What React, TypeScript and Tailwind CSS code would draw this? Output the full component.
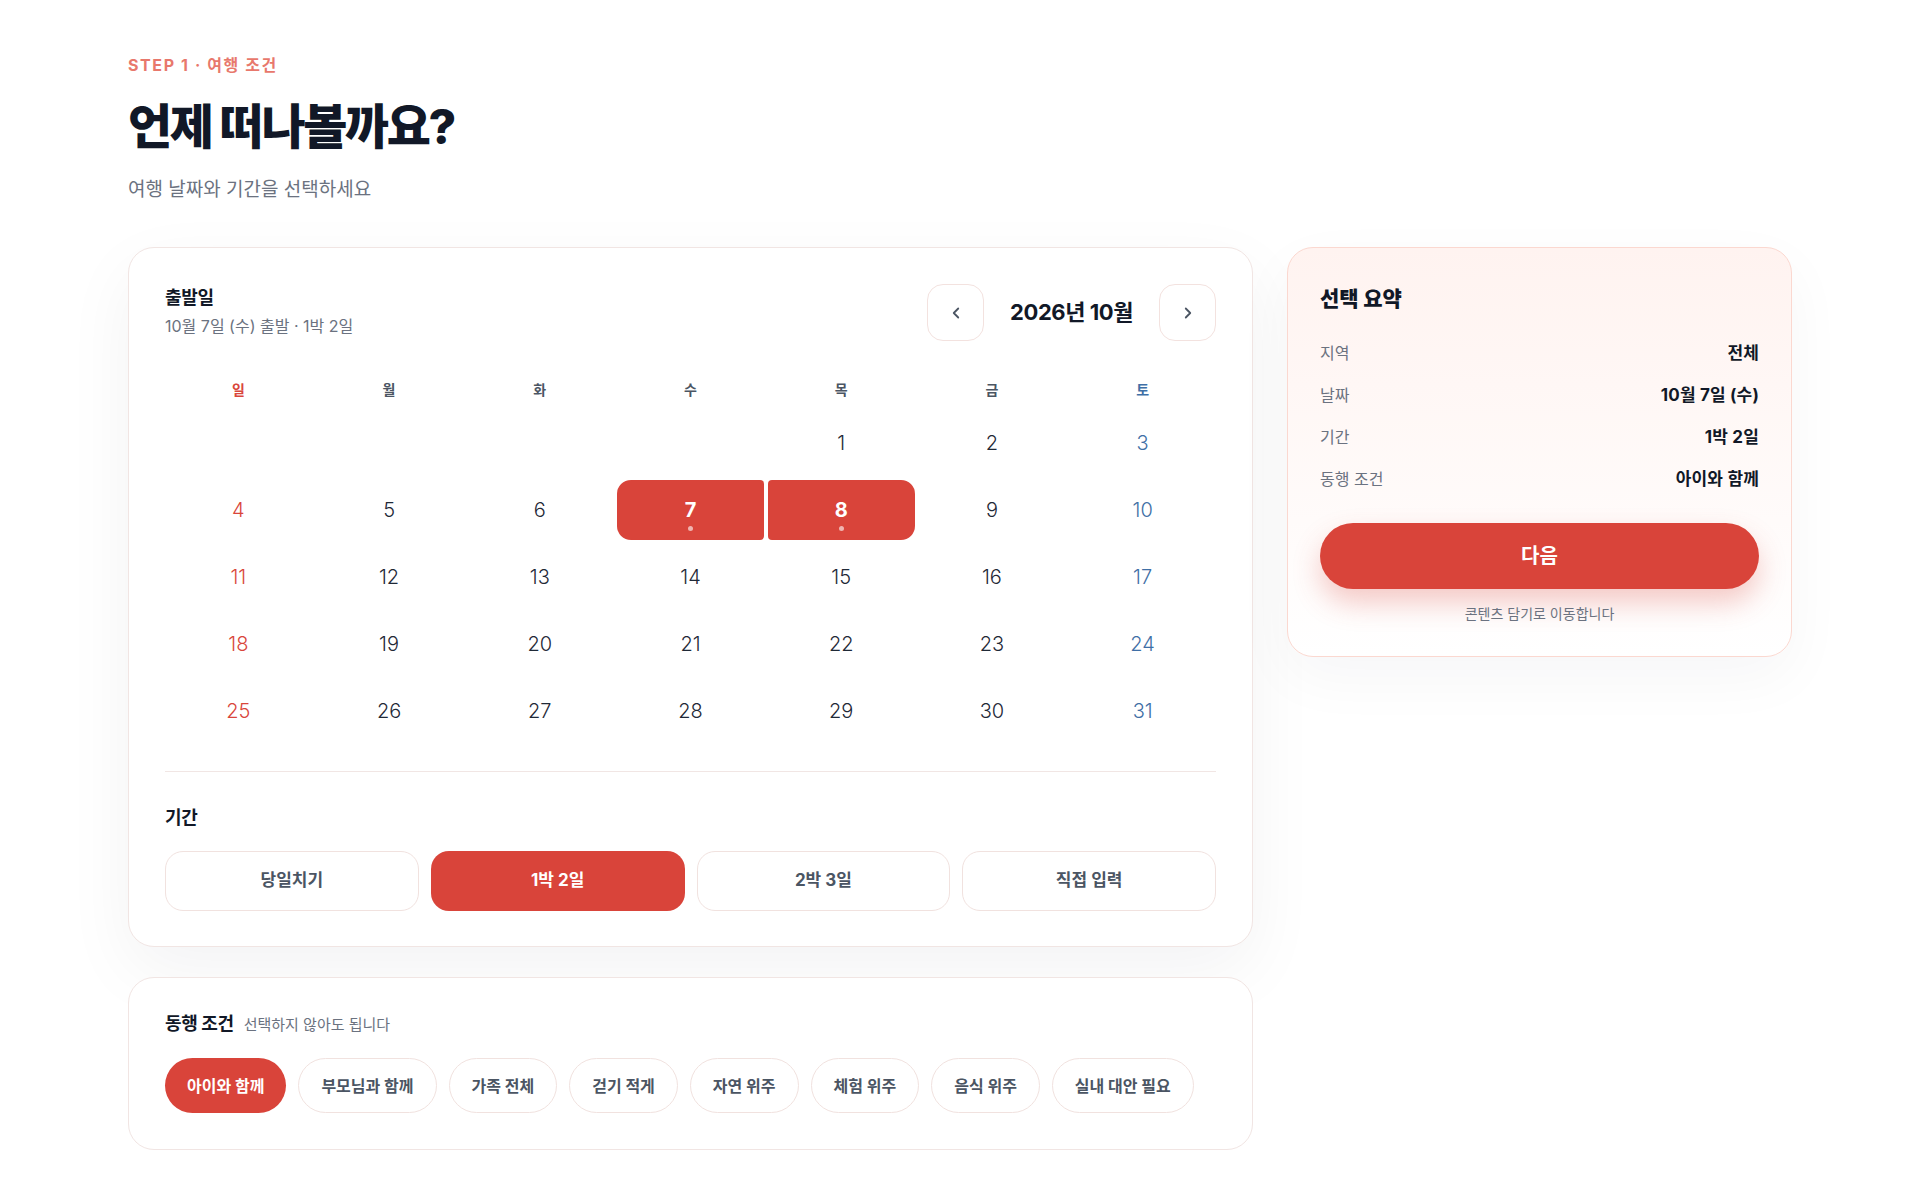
import { ChevronLeft, ChevronRight } from "lucide-react";

const days: (number | null)[] = [
  null, null, null, null,
  ...Array.from({ length: 31 }, (_, i) => i + 1),
];

const weekdays = ["일", "월", "화", "수", "목", "금", "토"];

const durations = ["당일치기", "1박 2일", "2박 3일", "직접 입력"];

const companions = [
  "아이와 함께",
  "부모님과 함께",
  "가족 전체",
  "걷기 적게",
  "자연 위주",
  "체험 위주",
  "음식 위주",
  "실내 대안 필요",
];

const summary = [
  ["지역", "전체"],
  ["날짜", "10월 7일 (수)"],
  ["기간", "1박 2일"],
  ["동행 조건", "아이와 함께"],
];

function DayCell({ day, index }: { day: number | null; index: number }) {
  if (day === null) return <div className="h-[60px]" />;
  const col = index % 7;
  if (day === 7 || day === 8) {
    const shape =
      day === 7
        ? "rounded-l-[14px] rounded-r-[4px]"
        : "rounded-r-[14px] rounded-l-[4px]";
    return (
      <div
        className={`relative flex h-[60px] flex-col items-center justify-center bg-[#d9443a] ${shape}`}
      >
        <span className="text-[20px] font-bold leading-none text-white">{day}</span>
        <span className="absolute bottom-[9px] h-[5px] w-[5px] rounded-full bg-white/60" />
      </div>
    );
  }
  const color =
    col === 0 ? "text-[#d9463b]" : col === 6 ? "text-[#3f6fa6]" : "text-[#1f2937]";
  return (
    <div className={`flex h-[60px] items-center justify-center text-[20px] font-light ${color}`}>
      {day}
    </div>
  );
}

export default function App() {
  return (
    <div className="min-h-screen bg-white font-[family-name:Inter,'Noto_Sans_CJK_KR',sans-serif] text-[#111827]">
      <div className="mx-auto max-w-[1664px] pt-[54px] pb-16">
        {/* page heading */}
        <header>
          <p className="text-[16px] font-bold leading-[22px] tracking-[0.1em] text-[#e8786c]">
            STEP 1 · 여행 조건
          </p>
          <h1 className="mt-[23px] text-[48px] font-extrabold leading-[56px] tracking-[-0.05em] text-[#111827]">
            언제 떠나볼까요?
          </h1>
          <p className="mt-[21px] text-[19px] leading-[27px] text-[#6b7280]">
            여행 날짜와 기간을 선택하세요
          </p>
        </header>

        <div className="mt-[44px] grid grid-cols-[minmax(0,1fr)_505px] items-start gap-[34px]">
          <div className="flex flex-col gap-[30px]">
            {/* date + duration card */}
            <section className="rounded-[26px] border border-[#f1e5e3] bg-white px-9 pt-9 pb-[35px] shadow-[0_24px_70px_rgba(15,23,42,0.05)]">
              <div className="flex items-start justify-between">
                <div>
                  <h2 className="text-[18px] font-bold leading-[27px] tracking-[-0.02em] text-[#111827]">
                    출발일
                  </h2>
                  <p className="mt-1 text-[16px] leading-[22px] text-[#6b7280]">
                    10월 7일 (수) 출발 · 1박 2일
                  </p>
                </div>
                <div className="flex items-center gap-[26px]">
                  <button className="flex h-[57px] w-[57px] items-center justify-center rounded-[16px] border border-[#f3e2df] bg-white text-[#4b5563]">
                    <ChevronLeft size={18} strokeWidth={2.4} />
                  </button>
                  <span className="text-[22px] font-bold tracking-[-0.02em] text-[#111827]">
                    2026년 10월
                  </span>
                  <button className="flex h-[57px] w-[57px] items-center justify-center rounded-[16px] border border-[#f3e2df] bg-white text-[#4b5563]">
                    <ChevronRight size={18} strokeWidth={2.4} />
                  </button>
                </div>
              </div>

              <div className="mt-7 grid grid-cols-7 gap-x-1">
                {weekdays.map((w, i) => (
                  <div
                    key={w}
                    className={`flex h-10 items-center justify-center text-[14px] font-bold ${
                      i === 0 ? "text-[#d9463b]" : i === 6 ? "text-[#3f6fa6]" : "text-[#4b5563]"
                    }`}
                  >
                    {w}
                  </div>
                ))}
              </div>

              <div className="mt-1 grid grid-cols-7 gap-x-1 gap-y-[7px]">
                {days.map((d, i) => (
                  <DayCell key={i} day={d} index={i} />
                ))}
              </div>

              <div className="mt-[30px] h-px bg-[#f1e6e4]" />

              <h3 className="mt-8 text-[18px] font-bold leading-[27px] tracking-[-0.02em] text-[#111827]">
                기간
              </h3>
              <div className="mt-5 grid grid-cols-4 gap-3">
                {durations.map((d) => {
                  const active = d === "1박 2일";
                  return (
                    <button
                      key={d}
                      className={`h-[60px] rounded-[18px] text-[17px] font-bold ${
                        active
                          ? "bg-[#d9443a] text-white"
                          : "border border-[#f1e2df] bg-white text-[#4b5563]"
                      }`}
                    >
                      {d}
                    </button>
                  );
                })}
              </div>
            </section>

            {/* companion card */}
            <section className="rounded-[26px] border border-[#f1e5e3] bg-white px-9 pt-8 pb-9">
              <div className="flex items-baseline gap-[10px]">
                <h3 className="text-[18px] font-bold leading-[27px] tracking-[-0.02em] text-[#111827]">
                  동행 조건
                </h3>
                <span className="text-[15px] text-[#6b7280]">선택하지 않아도 됩니다</span>
              </div>
              <div className="mt-[21px] flex flex-wrap gap-3">
                {companions.map((c) => {
                  const active = c === "아이와 함께";
                  return (
                    <button
                      key={c}
                      className={`h-[55px] rounded-full px-[22px] text-[16px] font-bold ${
                        active
                          ? "bg-[#d9443a] text-white"
                          : "border border-[#f1e2df] bg-white text-[#4b5563]"
                      }`}
                    >
                      {c}
                    </button>
                  );
                })}
              </div>
            </section>
          </div>

          {/* selection summary */}
          <aside className="rounded-[26px] border border-[#fbd8d0] bg-gradient-to-b from-[#fff3f0] to-white px-8 pt-[37px] pb-8 shadow-[0_20px_60px_rgba(15,23,42,0.04)]">
            <h2 className="text-[21px] font-extrabold leading-[28px] text-[#111827]">선택 요약</h2>
            <dl className="mt-7 flex flex-col gap-[18px]">
              {summary.map(([k, v]) => (
                <div key={k} className="flex items-center justify-between leading-6">
                  <dt className="text-[16px] text-[#6b7280]">{k}</dt>
                  <dd className="text-[17px] font-bold tracking-[0.01em] text-[#111827]">{v}</dd>
                </div>
              ))}
            </dl>
            <button className="mt-8 h-[66px] w-full rounded-full bg-[#d9443a] text-[20px] font-bold text-white shadow-[0_14px_28px_rgba(217,68,58,0.28)]">
              다음
            </button>
            <p className="mt-[14px] text-center text-[14px] leading-[21px] text-[#6b7280]">
              콘텐츠 담기로 이동합니다
            </p>
          </aside>
        </div>
      </div>
    </div>
  );
}
